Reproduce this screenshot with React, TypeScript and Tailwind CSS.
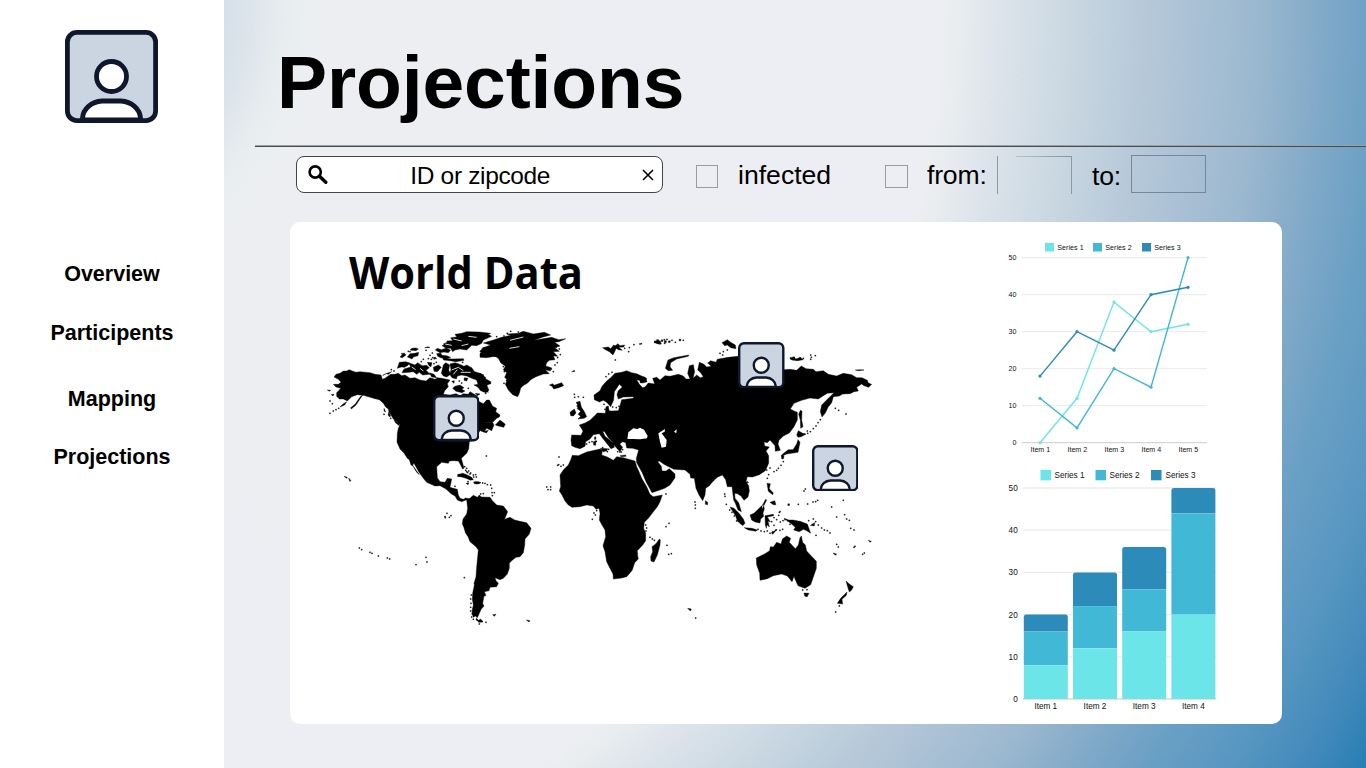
import React from 'react';

const FONT = "font-['Liberation_Sans',Arial,sans-serif]";

function Avatar({ className }: { className: string }) {
  return (
    <svg className={className} viewBox="0 0 93 93" fill="none" stroke="#0e172b" strokeWidth="4.8">
      <rect x="2.4" y="2.4" width="88.2" height="88.2" rx="9.5" fill="#cbd5e1" stroke="none" />
      <circle cx="46.5" cy="46.5" r="15" fill="#fff" />
      <path d="M17.5 90V88A21 18 0 0 1 37 71H56A21 18 0 0 1 75.500 88V90Z" fill="#fff" />
      <rect x="2.4" y="2.4" width="88.2" height="88.2" rx="9.5" />
    </svg>
  );
}

const northAmerica =
  'M88 134L80 138L70 138L60 145L48 148L42 156L55 163L63 172L55 178L40 178L48 186L62 190L56 197L50 203L50 214L58 222L70 222L82 228L95 215L112 209L130 211L148 216L165 221L178 224L190 235L197 246L205 252L207 262L213 270L220 282L230 290L240 300L235 310L232 325L231 352L240 372L252 384L262 400L268 404L273 420L280 424L298 449L292 444L285 434L278 420L282 415L296 440L310 460L320 472L345 483L360 482L378 492L394 507L405 513L412 525L425 530L440 524L446 530L452 522L437 519L430 523L420 520L415 510L412 493L400 490L390 487L395 462L382 460L375 472L360 470L352 458L350 425L365 412L385 415L388 408L400 407L415 408L422 420L428 432L432 430L424 400L440 385L446 372L448 350L475 325L495 293L520 290L530 280L538 276L540 270L527 260L530 250L518 244L508 225L500 225L490 236L478 230L470 212L450 200L445 208L430 206L420 212L408 206L390 210L370 208L374 197L385 185L382 176L390 165L365 160L352 158L345 163L330 158L318 168L300 165L285 158L270 160L255 150L245 152L235 145L224 148L212 148L195 160L187 163L183 150L165 148L150 143L120 140L108 142L95 137Z';

const arctic = [
  'M366 62L385 55L380 48L398 47L392 38L410 36L405 28L425 25L440 20L478 21L512 25L503 31L515 34L490 45L485 55L470 62L455 61L440 75L420 72L405 75L398 80L392 70L378 70Z',
  'M232 130L238 112L258 110L270 115L262 122L254 127L244 126Z M240 96L252 83L258 90L247 98Z M262 96L270 86L284 85L296 82L294 92L280 96L276 102Z',
  'M246 143L252 132L272 126L266 113L285 120L293 113L306 122L320 121L328 128L318 136L330 148L308 150L298 142L290 148L280 140L268 142Z',
  'M322 112L336 113L333 125L327 122Z M340 127L355 120L364 127L352 140L342 139Z M328 143L342 148L350 158L335 156Z',
  'M364 145L370 120L377 113L389 120L386 135L392 148L380 156L370 153Z',
  'M390 117L405 113L417 117L432 124L440 120L455 128L464 140L480 145L492 150L486 155L510 169L513 176L500 180L507 196L497 203L482 197L473 186L462 180L474 178L470 166L455 160L440 153L425 150L412 153L409 162L396 158L389 148L393 135Z',
  'M370 99L396 102L430 101L432 106L408 110L390 107L370 105Z M350 86L362 84L366 91L380 92L392 97L376 102L362 98L353 94Z',
  'M405 184L420 180L432 188L425 193L435 198L426 203L408 199L398 190Z M433 158L444 160L440 168L432 166Z',
  'M395 169L403 167L402 175Z M466 205L480 207L472 212Z M270 75L288 77L295 72L288 69L276 70Z M314 68L324 65L330 68Z M370 57L382 51L386 60L378 65Z M346 75L352 70L364 74L378 70L392 75L385 83L372 81L360 83Z',
  'M479 79L492 67L510 70L525 65L540 57V94L523 95L514 82L505 90L487 86Z M340 99L346 96L350 102Z',
  'M188 152L198 146L205 148L215 140L206 143L196 147L190 150Z',
  'M480 310L493 293L517 291L522 300L515 317L500 310L492 321L482 318Z M526 300L540 285L556 298L551 307L535 303Z M489 320L505 316L499 324Z',
  'M105 238L114 225L122 214L128 210L118 225L108 240L94 252L92 248Z M80 230L68 238L60 246L74 240Z M22 195L32 196L28 199Z M34 209L42 207L39 213Z',
  'M206 262L212 272L209 276L204 270Z M192 250L197 261L192 258Z M222 285L236 295L239 303L227 294Z',
  'M72 454L82 457L80 460Z M86 459L93 467L89 469Z M412 450L428 445L440 449L455 457L460 465L450 463L438 455L422 454Z M461 472L468 470L482 473L474 477L463 476Z',
].join(' ');

const greenland =
  'M0 97L0 85L22 73L5 70L32 60L10 54L40 45L65 37L92 31L80 27L115 25L130 19L160 27L193 22L212 30L190 36L162 46L215 37L236 44L257 41L237 50L224 52L240 63L224 68L238 79L220 80L233 94L220 93L225 104L208 106L200 113L197 123L214 128L211 138L196 134L208 146L190 147L168 155L152 164L143 174L129 182L122 190L118 205L113 215L98 209L85 195L76 178L82 165L74 157L80 143L70 135L76 124L62 113L56 101L46 94L20 98Z M208 180L218 176L222 181L245 173L251 182L236 188L221 192L216 184Z M0 27L12 26L32 32L12 41L0 54Z M0 145L18 158L12 166L34 171L22 178L18 190L25 202L8 198L0 188Z';

const europeIslands =
  'M289 232L300 229L304 246L314 262L320 275L312 280L294 282L302 274L294 268L302 259L292 251L294 243Z M272 272L270 262L283 252L288 264L280 273Z M368 68L385 66L392 71L401 60L410 66L405 78L399 90L388 80L374 73Z M402 65L414 56L420 62L434 60L431 66L416 67L427 76L415 74Z M522 50L538 47L540 58L531 56Z M361 370L383 371L380 378L369 380Z M340 350L348 347L347 361L341 360Z M344 336L347 335L348 343L343 343Z M420 392L437 390L438 394L424 395Z M275 140L283 136L285 139Z';

const southAmerica =
  'M80 90L88 86L100 76L112 82L118 75L124 81L150 82L158 93L170 105L190 108L203 125L197 140L193 148L210 142L224 150L240 154L260 158L273 175L268 192L255 207L254 226L250 248L240 260L228 262L215 272L208 280L208 295L202 312L190 325L180 329L165 323L168 332L175 340L170 350L150 352L147 362L133 365L138 376L132 379L128 400L132 408L124 417L118 430L112 443L106 438L100 442L96 430L97 418L100 405L97 388L98 370L103 345L102 340L108 320L110 290L115 240L108 230L90 215L84 200L76 188L72 173L67 162L69 147L80 132L83 115Z M109 445L116 451L122 447L129 456L119 457L108 450Z M54 13L70 13L86 20L98 28L92 31L78 25L62 20L53 20Z M101 36L115 35L123 38L110 41Z M78 40L87 39L84 44Z M259 450L270 452L267 456Z M158 434L168 433L163 439Z';

const africa =
  'M757 391L775 392L800 381L840 372L847 377L845 390L862 396L880 406L890 395L910 398L945 408L950 425L957 440L965 460L980 485L990 508L1000 515L1027 510L1020 530L1012 545L1000 560L985 580L973 592L971 610L977 625L977 647L968 660L952 677L953 692L955 702L944 713L937 735L928 746L920 755L905 759L880 762L879 747L870 730L860 710L855 680L849 662L857 635L855 615L846 600L838 585L840 565L837 550L828 553L820 543L800 540L780 545L756 547L745 540L735 528L726 510L718 498L722 485L720 450L730 435L745 420L752 405Z M1018 642L1021 645L1020 660L1012 690L1002 711L993 708L992 695L998 680L996 665L1008 656Z';

const eurasia =
  'M765 367L755 362L753 345L755 330L783 331L789 318L778 300L795 294L810 286L824 272L832 264L856 265L858 245L865 243L867 257L875 258L895 257L900 242L905 224L940 220L941 215L910 216L895 222L891 210L894 198L907 186L898 178L883 200L881 225L872 245L860 232L850 226L838 231L823 224L822 210L840 197L846 184L860 168L872 158L885 145L905 142L920 137L935 143L950 146L980 160L978 171L950 164L958 178L968 188L975 186L985 174L1004 177L998 160L1010 157L1020 165L1035 152L1050 154L1075 148L1090 153L1098 162L1110 162L1103 145L1108 122L1120 119L1124 140L1119 160L1130 150L1141 158L1150 155L1142 143L1133 135L1138 112L1152 118L1160 126L1174 124L1163 114L1172 107L1188 112L1192 103L1225 97L1270 92L1390 134L1410 133L1430 136L1444 123L1458 131L1480 133L1488 140L1510 137L1525 148L1550 153L1570 145L1595 149L1610 158L1626 158L1642 166L1645 174L1655 178L1646 187L1632 182L1625 177L1610 187L1615 198L1602 200L1590 206L1568 207L1558 213L1540 215L1535 233L1524 247L1516 264L1506 276L1501 260L1505 240L1520 225L1542 203L1522 205L1510 212L1495 222L1470 219L1445 226L1422 235L1411 252L1422 258L1432 262L1432 285L1422 305L1408 324L1390 333L1377 346L1374 357L1381 376L1366 379L1365 362L1355 351L1350 345L1342 353L1332 351L1334 363L1348 366L1338 378L1346 392L1346 415L1336 437L1318 449L1298 456L1282 455L1278 470L1286 482L1288 498L1284 516L1272 526L1263 513L1252 506L1244 505L1245 520L1256 533L1264 560L1254 555L1246 535L1241 525L1236 485L1222 485L1217 464L1207 450L1192 457L1178 470L1168 482L1157 490L1155 510L1148 527L1137 510L1128 490L1123 460L1112 459L1110 448L1095 435L1062 433L1046 425L1032 418L1018 408L1013 410L1024 424L1026 438L1038 438L1048 431L1065 447L1065 458L1050 480L1034 490L996 503L978 470L966 442L950 413L949 400L956 375L938 370L920 369L917 353L908 350L899 357L908 367L900 380L887 366L877 350L866 340L854 320L848 319L855 334L870 346L882 356L883 367L873 371L861 356L848 340L838 326L820 329L810 342L797 350L795 364L780 371Z';

const asiaIslands =
  'M76 130L84 105L102 98L146 90L145 94L110 102L92 113L90 125L98 136L85 137Z M0 155L14 156L21 170L8 174L0 173Z M246 53L262 44L272 52L286 60L288 71L272 68L262 60L254 62Z M481 256L486 258L485 285L489 305L482 310L481 285L476 268Z M470 330L475 317L488 325L497 327L484 335L474 337Z M474 344L480 352L474 382L455 385L440 387L425 394L428 387L445 374L459 374L470 357Z M424 390L432 393L430 402L425 401Z M646 135L660 134L672 135L656 137Z M450 98L462 96L468 103L480 97L490 104L472 107L455 105Z';

const oceania =
  'M349 264L375 251L389 242L391 230L400 231L410 217L423 222L427 207L440 198L452 205L448 217L466 236L475 225L480 203L484 198L488 217L496 225L500 243L516 260L529 274L529 295L517 330L512 344L495 355L474 347L464 325L462 319L456 335L450 328L442 318L425 312L400 317L382 326L360 331L359 310L350 285Z M492 369L507 370L501 381L494 378Z M618 333L628 342L640 350L635 360L628 366L624 354Z M621 366L619 376L606 388L608 402L592 400L602 385Z M270 111L282 115L297 130L310 147L315 160L308 167L292 153L287 138Z M313 173L336 175L352 180L348 184L325 180Z M330 135L342 130L352 120L370 103L373 116L369 130L371 139L362 147L360 159L345 156L335 150Z M375 137L400 133L401 137L382 141L391 156L384 153L388 171L381 164L379 175L376 165Z M381 40L391 41L388 56L400 69L398 74L385 64Z M390 97L404 92L408 104L400 104Z M432 145L446 150L458 150L480 154L502 162L512 190L500 182L490 178L478 185L461 180L466 172L452 160Z M511 166L524 158L523 168Z M196 92L203 97L203 104L196 103Z M366 118L380 90L377 88L366 108Z M411 178L398 193L394 188Z M143 415L154 417L151 423Z M579 249L590 252L586 256Z M685 211L694 214L690 217Z M316 38L322 34L326 38Z';

const lakes =
  'M925 322L940 310L952 312L960 308L968 322L983 332L981 340L960 343L940 342L922 342Z M1015 325L1035 312L1034 320L1025 325L1040 345L1038 365L1025 368L1020 350Z M1062 320L1070 313L1069 325Z M960 308L972 314L983 333L978 341L964 335Z';

// Small islets, in the same coordinate space as the coastlines.
const islets: [number, number, number?][] = [
  [30, 265], [40, 258], [48, 254], [56, 250], [30, 228], [37, 236], [499, 393], [192, 268], [212, 280],
  [434, 425], [440, 430], [446, 438], [452, 444], [460, 450], [437, 436], [443, 443], [467, 449], [469, 456],
  [246, 86], [265, 79], [278, 73], [330, 91], [337, 84], [343, 101], [325, 101], [334, 103], [318, 76], [214, 134], [222, 138], [316, 128], [270, 80], [304, 110], [342, 116], [349, 112], [418, 168], [425, 174], [445, 190], [497, 205], [428, 112], [338, 98], [310, 103],
  [562, 25], [552, 33], [572, 19], [595, 21], [545, 40], [530, 35], [708, 67], [718, 72], [721, 89], [713, 98], [712, 113], [694, 132], [550, 125], [553, 140], [560, 166], [552, 175], [570, 190], [705, 120], [700, 140],
  [763, 208], [764, 217], [775, 215], [790, 217], [772, 234], [772, 243], [858, 155], [866, 147], [876, 142],
  [886, 105], [914, 70], [928, 68], [942, 59], [964, 56], [926, 80],
  [717, 396], [716, 419], [723, 424], [730, 420], [713, 421],
  [852, 238], [855, 253], [864, 254], [878, 246], [889, 248], [897, 244],
  [800, 357], [808, 352], [816, 350], [829, 349], [848, 368], [866, 373], [862, 380], [893, 380], [900, 381], [908, 374], [904, 381],
  [1006, 51, 6], [1013, 47, 6], [1019, 52, 6], [1026, 47, 5], [1033, 44], [1036, 50, 6], [1041, 43], [1048, 50, 5], [1056, 46], [1066, 52], [1080, 45, 5], [1090, 46], [1022, 56], [1034, 55], [960, 57],
  [1200, 85], [1210, 80], [1222, 75], [1208, 90], [1412, 101], [1422, 97], [1430, 103], [1441, 99], [1450, 100], [1472, 90], [1474, 97], [1486, 92], [1472, 103],
  [1454, 328], [1463, 325], [1471, 320], [1480, 311], [1488, 303], [1494, 293], [1501, 284], [1462, 318], [1546, 250], [1556, 256], [1578, 267],
  [1383, 421], [1375, 430], [1362, 440], [1370, 436], [1346, 449], [1390, 410], [1342, 460],
  [375, 575], [381, 565], [388, 577], [376, 578], [393, 572], [433, 758],
  [680, 486], [692, 486], [684, 494], [692, 494], [822, 564], [826, 570], [830, 557], [817, 583],
  [440, 440], [450, 447], [461, 456], [488, 474], [495, 475], [502, 479], [512, 480], [515, 490], [516, 503], [523, 503], [517, 512], [490, 506], [482, 507], [444, 470], [405, 484],
  [454, 810], [452, 822], [453, 835], [452, 847], [452, 858], [457, 867], [455, 876], [460, 883], [477, 890], [486, 889], [478, 897], [498, 892],
  [977, 600], [980, 609], [978, 618], [990, 637], [997, 642], [1003, 646], [1038, 507], [1038, 605], [1047, 595], [1041, 661], [1046, 688], [1054, 686], [1125, 531], [1126, 540], [1126, 550], [1214, 507], [1215, 514],
  [1229, 555], [1236, 562], [1243, 573], [1250, 588], [1219, 538], [1314, 613], [1323, 618], [1333, 620], [1342, 618], [1350, 625], [1358, 621], [1368, 615], [1380, 616], [1388, 613],
  [1330, 555], [1378, 562], [1355, 590], [1362, 601], [1370, 584], [1381, 591], [1389, 587], [1362, 578], [1376, 571], [1380, 560], [1395, 584], [1410, 598], [1403, 587],
  [1406, 539, 5], [1435, 538], [1463, 537], [1479, 531], [1487, 530], [1493, 526], [1452, 498], [1456, 492], [1535, 546], [1570, 526], [1550, 576], [1574, 569], [1580, 582], [1588, 586], [1592, 610], [1602, 615],
  [1466, 587], [1480, 582], [1487, 590], [1495, 600], [1505, 609], [1513, 615], [1522, 617], [1530, 624], [1488, 631],
  [1550, 658], [1555, 666], [1602, 667], [1605, 664], [1628, 688], [1633, 684], [1448, 795], [1461, 794], [1127, 879], [1558, 843], [1547, 861], [1415, 765],
  [118, 669], [125, 674], [150, 682], [156, 685], [175, 693], [202, 699], [209, 702], [288, 719], [318, 697], [321, 711], [1340, 435], [1350, 429],
];

function WorldMap() {
  return (
    <svg className="block h-[310px] w-[560px]" viewBox="0 0 1680 930">
      <g fill="#000" stroke="#000" strokeWidth="1.200" strokeLinejoin="round">
        <path d={northAmerica} />
        <path d={arctic} />
        <path d={greenland} transform="translate(480 0)" />
        <path d={europeIslands} transform="translate(480 0)" />
        <path d={southAmerica} transform="translate(360 435)" />
        <path d={africa} />
        <path d={eurasia} />
        <path d={asiaIslands} transform="translate(960 0)" />
        <path d={oceania} transform="translate(960 435)" />
        {islets.map(([x, y, s = 3], i) => (
          <rect key={i} x={x - s / 2} y={y - s / 2} width={s} height={s} />
        ))}
      </g>
      <path d={lakes} fill="#fff" />
      <g stroke="#fff" strokeWidth="2.500" fill="none">
        <path d="M375 57l20 4M400 42l25 6M425 62l20-5M445 34l25 3M275 126l12 8M300 130l10 8M395 135l20-8 15 10M422 142l30 0M448 168l18-3M570 46l40-10M598 65l-30 5M400 148l12-14" />
      </g>
    </svg>
  );
}

const C1 = '#6ce5e8';
const C2 = '#41b8d5';
const C3 = '#2d8bba';
const ticks = [0, 10, 20, 30, 40, 50];
const lineX = [1040, 1077, 1114, 1151, 1188];
const lines = [
  { color: C1, values: [0, 12, 38, 30, 32] },
  { color: C2, values: [12, 4, 20, 15, 50] },
  { color: C3, values: [18, 30, 25, 40, 42] },
];

function LineChart() {
  const y = (v: number) => 442.7 - v * 3.7;
  return (
    <svg className={`block h-[225px] w-[230px] ${FONT}`} viewBox="995 235 230 225" fontSize="7.1" fill="#111">
      {[C1, C2, C3].map((c, i) => (
        <g key={c}>
          <rect x={[1045, 1093, 1142][i]} y="243" width="9" height="8.500" fill={c} />
          <text x={[1057.300, 1105.300, 1154.300][i]} y="250" textLength="26.300">{`Series ${i + 1}`}</text>
        </g>
      ))}
      {ticks.map((t) => (
        <g key={t}>
          <path d={`M1021.500 ${y(t)}H1207`} stroke={t ? '#eeeeee' : '#d6d6d6'} strokeWidth="1.200" />
          <text x="1016.500" y={y(t) + 2.5} textAnchor="end">{t}</text>
        </g>
      ))}
      {lines.map((l) => (
        <g key={l.color} fill={l.color}>
          <polyline points={l.values.map((v, i) => `${lineX[i]},${y(v)}`).join(' ')} fill="none" stroke={l.color} strokeWidth="1.400" />
          {l.values.map((v, i) => (
            <circle key={i} cx={lineX[i]} cy={y(v)} r="1.600" />
          ))}
        </g>
      ))}
      {lineX.map((x, i) => (
        <text key={x} x={x + 0.3} y="452.200" textAnchor="middle">{`Item ${i + 1}`}</text>
      ))}
    </svg>
  );
}

const stacks = [
  [8, 16, 20],
  [12, 22, 30],
  [16, 26, 36],
  [20, 44, 50],
];

function BarChart() {
  const y = (v: number) => 699 - v * 4.22;
  return (
    <svg className={`block h-[255px] w-[230px] ${FONT}`} viewBox="995 460 230 255" fontSize="8.200" fill="#111">
      {[C1, C2, C3].map((c, i) => (
        <g key={c}>
          <rect x={[1040.500, 1095.500, 1151][i]} y="470" width="10.500" height="10.300" fill={c} />
          <text x={[1054.500, 1109.500, 1165.500][i]} y="478.200" textLength="30">{`Series ${i + 1}`}</text>
        </g>
      ))}
      {ticks.map((t) => (
        <g key={t}>
          <path d={`M1023 ${y(t)}H1216`} stroke={t ? '#ececec' : '#d8d8d8'} strokeWidth="1.300" />
          <text x="1017.700" y={y(t) + 3} textAnchor="end">{t}</text>
        </g>
      ))}
      {stacks.map(([a, b, c], i) => {
        const x = 1023.8 + i * 49.200;
        return (
          <g key={i}>
            <path d={`M${x} ${y(b)}V${y(c) + 2.5}q0-2.500 2.500-2.500h39q2.500 0 2.500 2.500V${y(b)}Z`} fill={C3} />
            <rect x={x} y={y(b)} width="44" height={(b - a) * 4.22} fill={C2} />
            <rect x={x} y={y(a)} width="44" height={a * 4.22} fill={C1} />
            <text x={x + 22} y="708.700" textAnchor="middle">{`Item ${i + 1}`}</text>
          </g>
        );
      })}
    </svg>
  );
}

export default function App() {
  return (
    <div
      className={`flex h-[768px] w-[1366px] overflow-hidden text-black ${FONT} bg-[radial-gradient(circle_at_7px_0px,#d5e0e8_217px,#dde5ec_245px,#e7ecee_275px,#ebeff2_300px,#edeef2_325px,#edeef3_932px,#e9edef_950px,#dfe5ec_985px,#cfdbe4_1045px,#bccddb_1115px,#abc1d5_1185px,#9bb8cf_1250px,#80a9c8_1318px,#6ba0c5_1370px,#5897c1_1440px,#4189bb_1510px,#2a7fb5_1555px)]`}
    >
      <aside className="flex h-full w-[223px] shrink-0 flex-col items-center bg-white pt-[30px]">
        <Avatar className="block h-[93px] w-[93px]" />
        <nav className="mt-[139px] ml-px flex flex-col items-center text-[21.500px] leading-6 font-bold">
          <a>Overview</a>
          <a className="mt-[35px]">Participents</a>
          <a className="mt-[42px]">Mapping</a>
          <a className="mt-[34px]">Projections</a>
        </nav>
      </aside>
      <main className="flex min-w-0 flex-1 flex-col border-l border-white">
        <header className="ml-[31px] h-[147px] border-b border-[#484d4f] pt-[38px] pl-[22px] shadow-[inset_0_-1px_0_#9ba2a5]">
          <h1 className="text-[75px] leading-[88px] font-bold tracking-[-0.1px]">Projections</h1>
        </header>
        <div className="flex h-[75px] items-start pt-[9px] pl-[72px] text-[26.600px]">
          <div className="flex h-[37px] w-[367px] items-center rounded-[8px] border border-[#444] bg-white">
            <svg className="ml-[11px] h-5 w-5" viewBox="0 0 20 20" fill="none" stroke="#000">
              <circle cx="7.200" cy="7" r="5.600" strokeWidth="2.600" />
              <path d="M11.500 11.200L17.800 17.300" strokeWidth="3.400" strokeLinecap="round" />
            </svg>
            <span className="flex-1 pt-[3px] pr-[9px] text-center text-[24.500px] leading-9 tracking-[-0.35px]">ID or zipcode</span>
            <svg className="mr-[8.500px] h-[12px] w-[12px]" viewBox="0 0 12 12" stroke="#000" strokeWidth="1.600">
              <path d="M1 1L11 11M11 1L1 11" />
            </svg>
          </div>
          <span className="mt-[9px] ml-[33px] h-[23px] w-[22px] border border-[#999b9f]" />
          <span className="ml-[20px] w-[95px] pt-px leading-[37px]">infected</span>
          <span className="mt-[9px] ml-[52px] h-[23px] w-[23px] border border-[#999b9f]" />
          <span className="ml-[19px] w-[61px] pt-px leading-[37px] tracking-[-0.2px]">from:</span>
          <span className="ml-[9px] flex h-[38px] w-[75px] justify-end border-x border-[#8d989f]">
            <span className="h-px w-[55px] bg-linear-to-r from-[#b6c4cc] to-[#84929b]" />
          </span>
          <span className="ml-[20px] w-[30px] pt-px leading-[38px] tracking-[-0.2px]">to:</span>
          <span className="-mt-px ml-[9px] h-[38px] w-[75px] border border-[#74889a]" />
        </div>
        <section className="ml-[66px] flex h-[502px] w-[992px] rounded-[10px] bg-white">
          <div className="relative w-[705px] pt-[20px] pl-[30px]">
            <h2 className="ml-[29px] w-[300px] origin-left scale-x-[0.925] font-['Open_Sans','Noto_Sans',sans-serif] text-[45px] leading-[60px] font-bold">World Data</h2>
            <div className="mt-[23px]">
              <WorldMap />
            </div>
            <Avatar className="absolute top-[173px] left-[142.500px] h-[46.500px] w-[46.500px]" />
            <Avatar className="absolute top-[119.500px] left-[448px] h-[46.500px] w-[46.500px]" />
            <Avatar className="absolute top-[222.500px] left-[521.500px] h-[46.500px] w-[46.500px]" />
          </div>
          <div className="w-[230px] pt-[13px]">
            <LineChart />
            <BarChart />
          </div>
        </section>
      </main>
    </div>
  );
}
